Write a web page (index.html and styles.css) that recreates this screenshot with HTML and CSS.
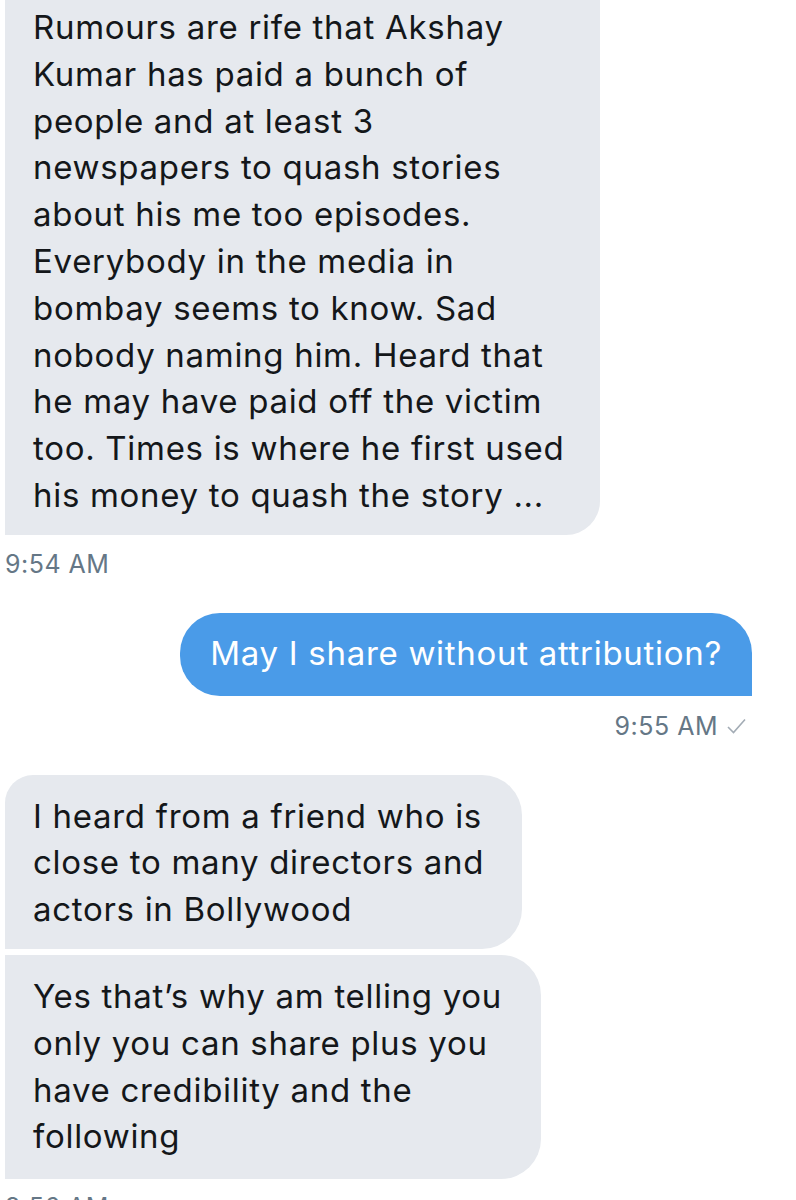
FILE: index.html
```html
<!DOCTYPE html>
<html>
<head>
<meta charset="utf-8">
<link rel="stylesheet" href="styles.css">
</head>
<body>
<div class="chat">
  <div class="msg in first">
    <div class="bubble in-bubble b1">Rumours are rife that Akshay<br>Kumar has paid a bunch of<br>people and at least 3<br>newspapers to quash stories<br>about his me too episodes.<br>Everybody in the media in<br>bombay seems to know. Sad<br>nobody naming him. Heard that<br>he may have paid off the victim<br>too. Times is where he first used<br>his money to quash the story ...</div>
    <div class="time">9:54 AM</div>
  </div>
  <div class="msg out">
    <div class="bubble out-bubble">May I share without attribution?</div>
    <div class="time out-time">9:55 AM <svg class="check" width="19" height="16" viewBox="0 0 19 16"><path d="M1 9 L6.5 14.5 L18 1.5" fill="none" stroke="#a3acb5" stroke-width="1.6"/></svg></div>
  </div>
  <div class="msg in group">
    <div class="bubble in-bubble b3">I heard from a friend who is<br>close to many directors and<br>actors in Bollywood</div>
    <div class="bubble in-bubble b4">Yes that’s why am telling you<br>only you can share plus you<br>have credibility and the<br>following</div>
    <div class="time">9:56 AM</div>
  </div>
</div>
</body>
</html>
```
FILE: styles.css
```css
html, body {
  margin: 0;
  padding: 0;
  background: #ffffff;
}
body {
  font-family: "Inter", "Roboto", "Liberation Sans", sans-serif;
  color: #14171a;
  overflow: hidden;
  height: 1200px;
}
.chat {
  display: flex;
  flex-direction: column;
  padding-left: 5px;
}
.msg {
  display: flex;
  flex-direction: column;
}
.msg.in { align-items: flex-start; }
.msg.out { align-items: flex-end; padding-right: 44px; margin-top: 36px; }
.bubble {
  font-size: 33px;
  line-height: 46.8px;
  letter-spacing: 0.7px;
}
.in-bubble {
  background: #e6e9ee;
  padding: 0 30px 0 28px;
}
.b1 {
  width: 537px;
  margin-top: -30px;
  padding-top: 34px;
  padding-bottom: 16px;
  border-radius: 0 0 34px 0;
}
.time {
  font-size: 25px;
  color: #657786;
  margin-top: 16px;
  line-height: 26px;
  letter-spacing: 0.5px;
}
.out-bubble {
  background: #4a9be8;
  color: #ffffff;
  padding: 17px 30px 19px 30px;
  border-radius: 40px 40px 0 40px;
}
.out-time {
  display: flex;
  align-items: center;
  gap: 9px;
  margin-top: 17px;
  margin-right: 6px;
}
.msg.group { margin-top: 36px; gap: 0; }
.b3 {
  width: 459px;
  padding-top: 18px;
  padding-bottom: 16px;
  border-radius: 28px 40px 40px 0;
}
.b4 {
  width: 478px;
  margin-top: 6px;
  padding-top: 18px;
  padding-bottom: 19px;
  border-radius: 0 40px 40px 0;
}
.group .time { margin-top: 15px; }
```
